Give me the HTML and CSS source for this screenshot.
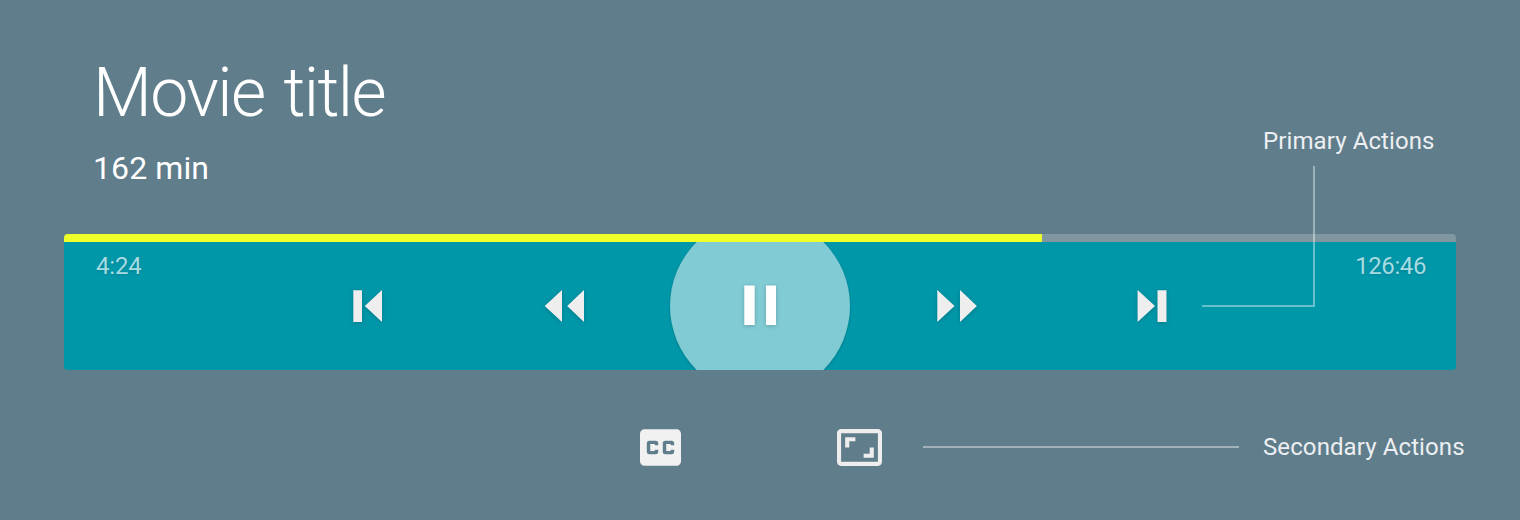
FILE: index.html
```html
<!DOCTYPE html>
<html lang="en">
<head>
<meta charset="utf-8">
<title>Movie title</title>
<link rel="stylesheet" href="styles.css">
</head>
<body>
<main class="player">
  <header class="heading">
    <h1 class="title">Movie title</h1>
    <p class="duration">162 min</p>
  </header>

  <section class="transport">
    <div class="progress"><div class="progress-fill" style="width: 70.28%"></div></div>
    <div class="controls">
      <span class="time elapsed">4:24</span>
      <div class="buttons">
        <svg class="icon" viewBox="0 0 48 48"><path d="M9.3 8.200H18V40H9.3zM20.8 24L38 8V40z"/></svg>
        <svg class="icon" viewBox="0 0 48 48"><path d="M4.7 24L22 8V40zM27.2 24L44 8V40z"/></svg>
        <div class="focus"><svg class="icon icon-pause" viewBox="0 0 48 48"><path d="M8.3 3.4H18.7V43H8.3zM30 3.4H40V43H30z"/></svg></div>
        <svg class="icon" viewBox="0 0 48 48"><path d="M5.3 8L22.5 24L5.3 40zM28 8L44.9 24L28 40z"/></svg>
        <svg class="icon" viewBox="0 0 48 48"><path d="M9.6 8L27 24L9.6 40zM29.5 8.200H38.5V40H29.5z"/></svg>
      </div>
      <span class="time total">126:46</span>
    </div>
  </section>

  <footer class="secondary">
    <svg class="icon-cc" viewBox="3 4 18 16"><path d="M19 4H5c-1.11 0-2 .9-2 2v12c0 1.1.89 2 2 2h14c1.1 0 2-.9 2-2V6c0-1.1-.9-2-2-2zm-8 7H9.5v-.5h-2v3h2V13H11v1c0 .55-.45 1-1 1H7c-.55 0-1-.45-1-1v-4c0-.55.45-1 1-1h3c.55 0 1 .45 1 1v1zm7 0h-1.500v-.5h-2v3h2V13H18v1c0 .55-.45 1-1 1h-3c-.55 0-1-.45-1-1v-4c0-.55.45-1 1-1h3c.55 0 1 .45 1 1v1z"/></svg>
    <svg class="icon-ratio" viewBox="1 3 22 18"><path d="M19 12h-2v3h-3v2h5v-5zM7 9h3V7H5v5h2V9zm14-6H3c-1.100 0-2 .9-2 2v14c0 1.100.9 2 2 2h18c1.100 0 2-.9 2-2V5c0-1.100-.9-2-2-2zm0 16H3V5h18v14z"/></svg>
    <div class="rule"></div>
    <span class="label">Secondary Actions</span>
  </footer>

  <aside class="callout">
    <span class="label">Primary Actions</span>
    <div class="connector"></div>
  </aside>
</main>
</body>
</html>
```

FILE: styles.css
```css
* { box-sizing: border-box; }

body {
  margin: 0;
  background: #607d8b;
  color: #fff;
  font-family: Roboto, "Liberation Sans", sans-serif;
}

.player {
  position: relative;
  display: flex;
  flex-direction: column;
  width: 1520px;
  height: 520px;
  padding: 53px 0 0 64px;
  overflow: hidden;
}

.heading {
  height: 181px;
  padding-left: 29px;
}

.title {
  margin: 0;
  font-size: 68px;
  font-weight: 300;
  line-height: 80px;
  letter-spacing: -1.6px;
  word-spacing: 4px;
}

.duration {
  margin: 15px 0 0;
  font-size: 32px;
  line-height: 40px;
  letter-spacing: .1px;
}

.transport {
  width: 1392px;
  height: 136px;
  border-radius: 4px;
  overflow: hidden;
}

.progress {
  height: 8px;
  background: #8097a2;
}

.progress-fill {
  height: 100%;
  background: #eeff29;
}

.controls {
  display: grid;
  grid-template-columns: 206px 980px 206px;
  height: 128px;
  overflow: hidden;
  background: #0097a9;
}

.time {
  padding-top: 10px;
  color: #a6dbe2;
  font-size: 24px;
  line-height: 28px;
  letter-spacing: -.2px;
  text-shadow: 0 1px 3px rgba(0, 0, 0, .15);
}

.elapsed { padding-left: 32px; }

.total {
  padding-right: 30px;
  text-align: right;
  letter-spacing: -.4px;
}

.buttons {
  display: grid;
  grid-template-columns: repeat(5, 196px);
  align-items: center;
  justify-items: center;
  height: 128px;
}

.icon {
  width: 48px;
  height: 48px;
  fill: #eee;
  filter: drop-shadow(0 1px 2px rgba(0, 0, 0, .2));
}

.icon-pause { fill: #fff; }

.focus {
  display: flex;
  align-items: center;
  justify-content: center;
  width: 180px;
  height: 180px;
  margin: -26px 0;
  border-radius: 50%;
  background: #80cbd4;
  box-shadow: 0 1px 3px rgba(0, 0, 0, .18);
}

.secondary {
  display: flex;
  align-items: flex-start;
  height: 37px;
  margin: 59px 0 0 576px;
}

.icon-cc {
  width: 41px;
  height: 37px;
  fill: #f1f1f1;
}

.icon-ratio {
  width: 45px;
  height: 37px;
  margin-left: 156px;
  fill: #eee;
}

.rule {
  width: 316px;
  height: 2px;
  margin: 17px 24px 0 41px;
  background: #a0b1b9;
}

.label {
  color: #eceff1;
  font-size: 24px;
  line-height: 28px;
  letter-spacing: .1px;
  white-space: nowrap;
}

.secondary .label { padding-top: 4px; }

.callout {
  position: absolute;
  top: 127px;
  left: 1202px;
}

.callout .label {
  display: block;
  padding-left: 61px;
}

.connector {
  width: 113px;
  height: 141px;
  margin-top: 11px;
  border: solid rgba(255, 255, 255, .4);
  border-width: 0 2px 2px 0;
}
```
